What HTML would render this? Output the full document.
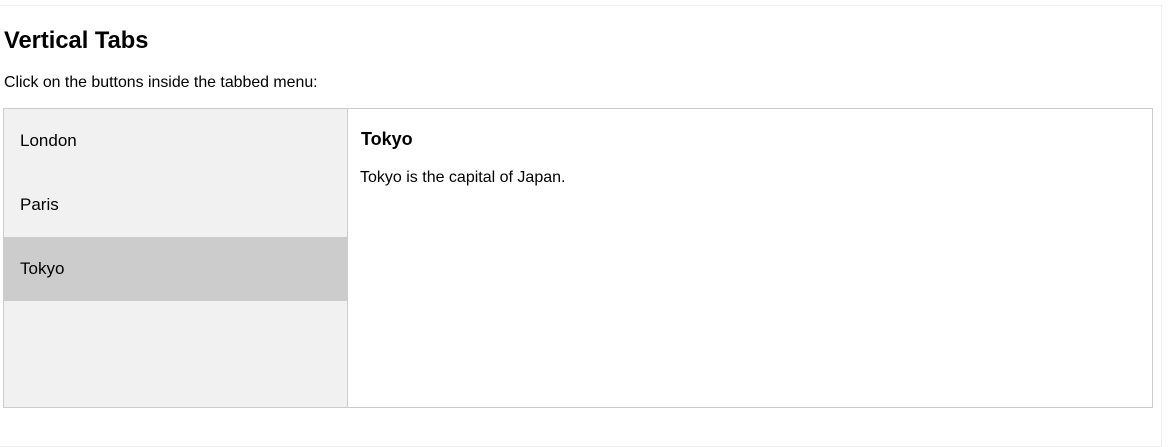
<!DOCTYPE html>
<html><head><style>
body{margin:0;background:#fff;font-family:"Liberation Sans",Arial,sans-serif;width:1176px;height:434px;overflow:hidden;position:relative}
.frame{position:absolute;left:-1px;top:5px;width:1161px;height:440px;border:1px solid #eee}
h2{position:absolute;left:4px;top:28px;margin:0;font-size:23.7px;font-weight:bold}
.p{position:absolute;left:4px;top:74px;font-size:15.9px}
.tab{position:absolute;left:3px;top:108px;width:343px;height:298px;border:1px solid #ccc;background:#f1f1f1}
.btn{height:64px;padding-left:16px;line-height:64px;font-size:17px;box-sizing:border-box}
.act{background:#ccc}
.content{position:absolute;left:347px;top:108px;width:804px;height:298px;border:1px solid #ccc}
.content h3{position:absolute;left:13px;top:20px;margin:0;font-size:18px}
.content .t{position:absolute;left:12px;top:60px;font-size:16px}
</style></head><body>
<div class="frame"></div>
<h2>Vertical Tabs</h2>
<div class="p">Click on the buttons inside the tabbed menu:</div>
<div class="tab"><div class="btn">London</div><div class="btn">Paris</div><div class="btn act">Tokyo</div></div>
<div class="content"><h3>Tokyo</h3><div class="t">Tokyo is the capital of Japan.</div></div>
</body></html>
